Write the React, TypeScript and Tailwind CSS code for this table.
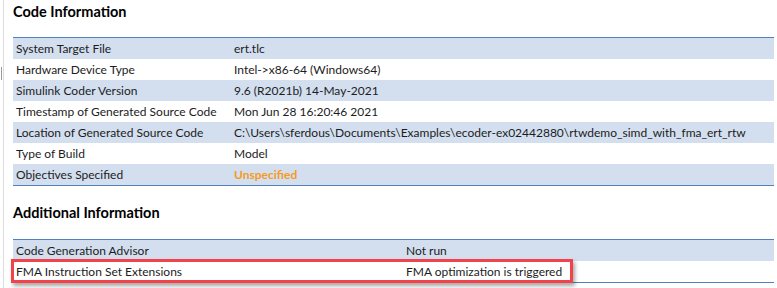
import React from 'react';

type Row = { label: string; value: string; tone?: 'warn' };

const codeInfo: Row[] = [
  { label: 'System Target File', value: 'ert.tlc' },
  { label: 'Hardware Device Type', value: 'Intel->x86-64 (Windows64)' },
  { label: 'Simulink Coder Version', value: '9.6 (R2021b) 14-May-2021' },
  { label: 'Timestamp of Generated Source Code', value: 'Mon Jun 28 16:20:46 2021' },
  {
    label: 'Location of Generated Source Code',
    value: 'C:\\Users\\sferdous\\Documents\\Examples\\ecoder-ex02442880\\rtwdemo_simd_with_fma_ert_rtw',
  },
  { label: 'Type of Build', value: 'Model' },
  { label: 'Objectives Specified', value: 'Unspecified', tone: 'warn' },
];

const additionalInfo: Row[] = [
  { label: 'Code Generation Advisor', value: 'Not run' },
  { label: 'FMA Instruction Set Extensions', value: 'FMA optimization is triggered' },
];

const InfoTable = ({ rows, labelWidth, highlight }: { rows: Row[]; labelWidth: string; highlight?: number }) => (
  <div className="relative w-[761px] border-t border-b border-[#4f81bd]">
    {rows.map((row, i) => (
      <div key={row.label} className={`flex h-[21px] items-center ${i % 2 === 0 ? 'bg-[#d3dfee]' : 'bg-white'}`}>
        <div className={`${labelWidth} shrink-0 pl-[3px] whitespace-nowrap`}>{row.label}</div>
        <div className={`pl-[3px] whitespace-nowrap ${row.tone === 'warn' ? 'font-bold text-[#f79a1e]' : ''}`}>{row.value}</div>
      </div>
    ))}
    {highlight !== undefined && (
      <div
        className="absolute left-[-2px] w-[562px] h-[24px] border-[3px] border-[#f2424a] shadow-[2px_3px_4px_rgba(0,0,0,0.35)]"
        style={{ top: highlight * 21 - 2 }}
      />
    )}
  </div>
);

export default function App() {
  return (
    <div className="flex h-[288px] w-[777px] overflow-hidden bg-white text-[12px] leading-none text-[#1c1c24] font-['Lato','Liberation_Sans',sans-serif]">
      {/* window edge */}
      <div className="ml-px w-px shrink-0">
        <div className="mt-[67px] h-[13px] bg-[#9a9a9a]" />
      </div>
      <div className="ml-px w-px shrink-0 bg-[#dcdcdc]" />
      <div className="pl-[9px]">
        <h2 className="mt-[3px] text-[14.5px] font-bold text-black leading-[18px]">Code Information</h2>
        <div className="mt-[16px]">
          <InfoTable rows={codeInfo} labelWidth="w-[218px]" />
        </div>
        <h2 className="mt-[18px] text-[14.5px] font-bold text-black leading-[18px]">Additional Information</h2>
        <div className="mt-[17px]">
          <InfoTable rows={additionalInfo} labelWidth="w-[390px]" highlight={1} />
        </div>
      </div>
    </div>
  );
}
